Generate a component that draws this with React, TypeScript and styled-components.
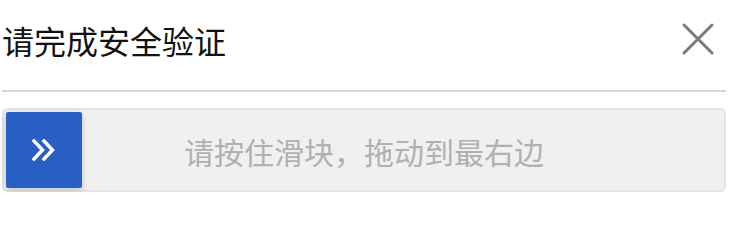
import React from "react";
import styled, { createGlobalStyle } from "styled-components";

const Global = createGlobalStyle`
  html, body { margin: 0; padding: 0; background: #ffffff; }
  body { font-family: "Noto Sans CJK SC", "Noto Sans", sans-serif; }
`;

const Panel = styled.div`
  width: 724px;
  margin-left: 2px;
  display: flex;
  flex-direction: column;
`;

const Header = styled.div`
  display: flex;
  align-items: center;
  justify-content: space-between;
  border-bottom: 2px solid #d6d6d6;
  box-sizing: border-box;
  height: 92px;
  padding-bottom: 12px;
`;

const Title = styled.h1`
  margin: 0;
  font-size: 32px;
  font-weight: 400;
  color: #111111;
  line-height: 1;
  padding-top: 2px;
`;

const Close = styled.button`
  width: 34px;
  height: 34px;
  padding: 0;
  margin-right: 11px;
  border: none;
  background: transparent;
  display: flex;
  align-items: center;
  justify-content: center;
  cursor: pointer;
`;

const Track = styled.div`
  margin-top: 16px;
  height: 84px;
  box-sizing: border-box;
  border: 2px solid #e3e3e3;
  border-radius: 6px;
  background: #f0f0f0;
  padding: 2px;
  position: relative;
  display: flex;
  align-items: center;
`;

const Thumb = styled.div`
  width: 76px;
  height: 76px;
  background: #2a60c4;
  border-radius: 2px;
  box-shadow: 0 2px 6px rgba(0, 0, 0, 0.18);
  display: flex;
  align-items: center;
  justify-content: center;
  position: relative;
  z-index: 1;
`;

const Hint = styled.span`
  position: absolute;
  inset: 0;
  display: flex;
  align-items: center;
  justify-content: center;
  font-size: 30px;
  color: #b0b0b0;
  line-height: 1;
  padding-top: 1px;
`;

export default function App() {
  return (
    <>
      <Global />
      <Panel>
        <Header>
          <Title>请完成安全验证</Title>
          <Close aria-label="close">
            <svg width="32" height="32" viewBox="0 0 32 32">
              <path d="M2 2 L30 30 M30 2 L2 30" stroke="#7a7a7a" strokeWidth="3" strokeLinecap="round" fill="none" />
            </svg>
          </Close>
        </Header>
        <Track>
          <Hint>请按住滑块，拖动到最右边</Hint>
          <Thumb>
            <svg width="24" height="22" viewBox="0 0 24 22">
              <path d="M2 2 L10.5 11 L2 20 M12 2 L20.5 11 L12 20" stroke="#ffffff" strokeWidth="3.4" strokeLinecap="square" strokeLinejoin="miter" fill="none" />
            </svg>
          </Thumb>
        </Track>
      </Panel>
    </>
  );
}
